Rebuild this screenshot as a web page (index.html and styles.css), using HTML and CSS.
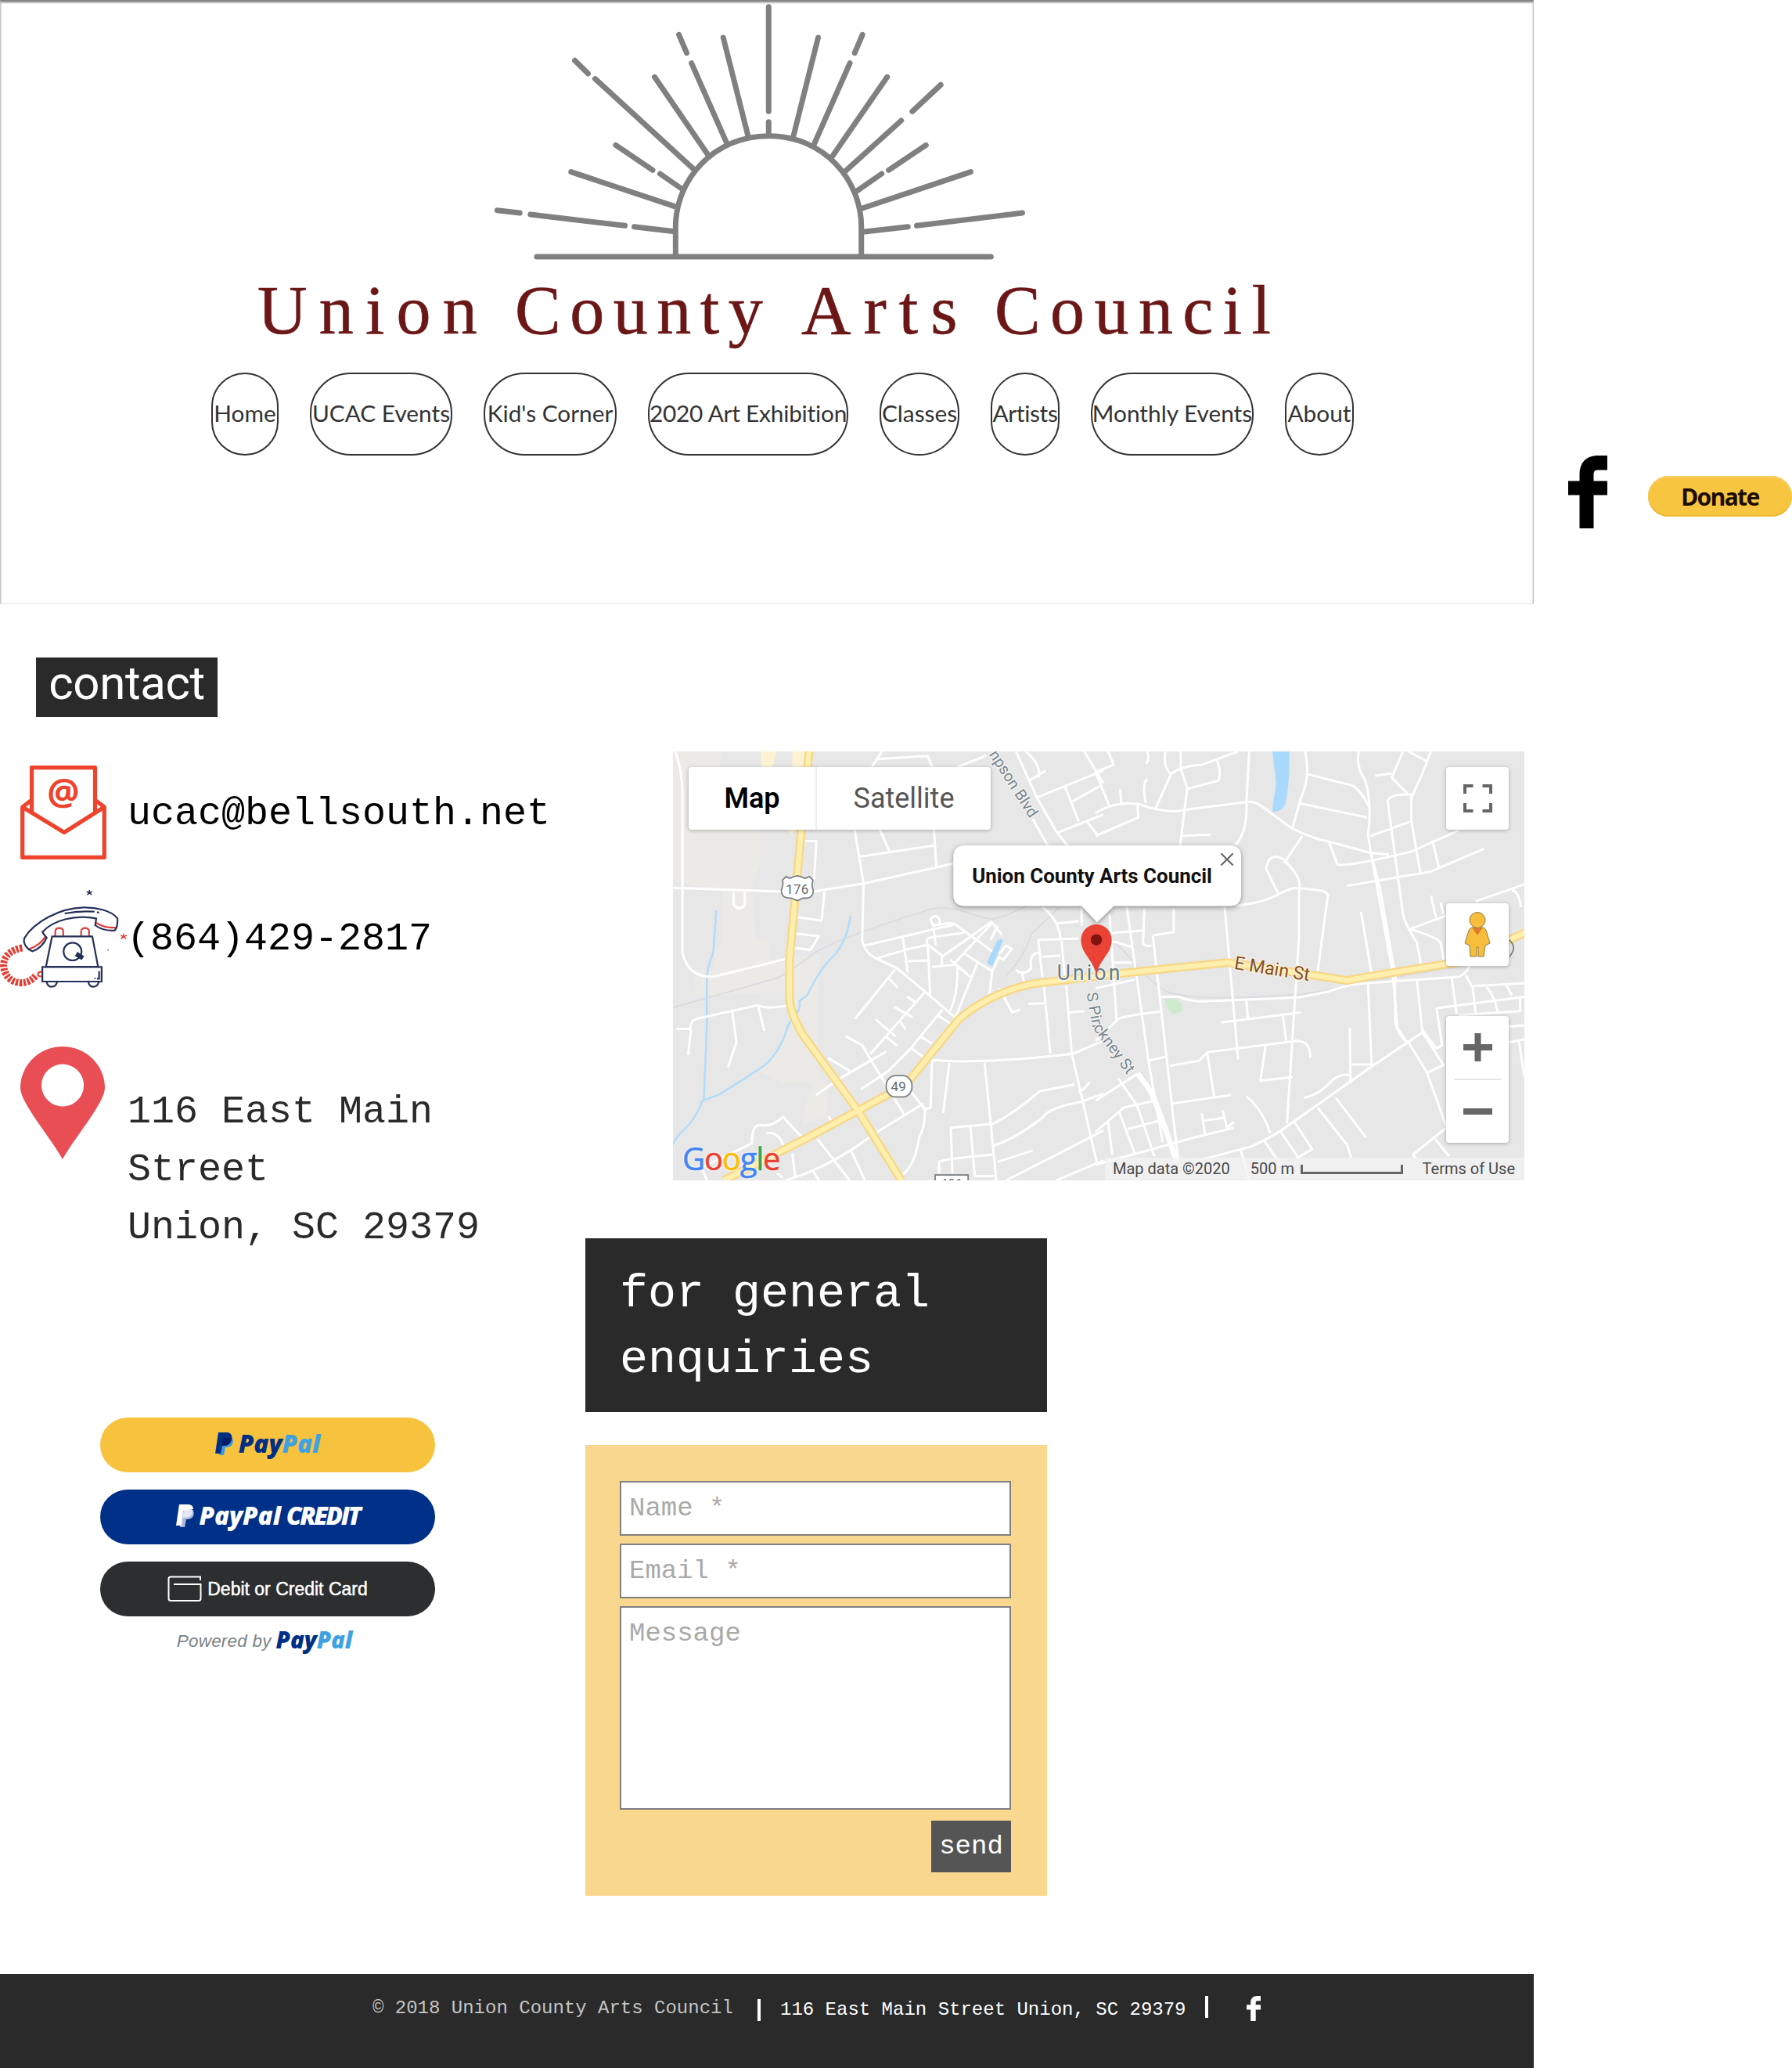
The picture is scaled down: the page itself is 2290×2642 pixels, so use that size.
FILE: index.html
```html
<!DOCTYPE html>
<html lang="en">
<head>
<meta charset="utf-8">
<title>Contact | Union County Arts Council</title>
<link rel="stylesheet" href="styles.css">
</head>
<body>
<div class="top">
  <header class="header">
    <svg class="sun" viewBox="0 0 1568 1050" preserveAspectRatio="none" aria-hidden="true">
      <path d="M182 984H1412M558 984V870C558 690 660 521 810 521S1061 690 1061 870V984"/>
      <path d="M810 26V427M810 467V516M687 144L754 520M567 133L588 203M601 242L697 550M501 295L649 600M285 232L321 282M340 302L610 652M396 556L496 652M516 666L577 726M275 659L560 793M75 806L136 816M165 822L421 865M446 869L555 887"/>
      <path d="M944 144L877 522M1064 133L1043 203M1030 242L932 556M1131 295L979 606M1276 325L1199 427M1169 462L1013 662M1236 556L1135 652M1116 666L1047 734M1357 659L1064 798M1497 816L1211 865M1187 869L1070 888"/>
    </svg>
    <h1 class="title"><span class="union">Union</span> <span class="county">County</span> <span class="arts">Arts</span> <span class="council">Council</span></h1>
    <nav class="nav">
      <a class="pill w-home">Home</a>
      <a class="pill w-events">UCAC Events</a>
      <a class="pill w-kids">Kid's Corner</a>
      <a class="pill w-exhibit">2020 Art Exhibition</a>
      <a class="pill w-classes">Classes</a>
      <a class="pill w-artists">Artists</a>
      <a class="pill w-monthly">Monthly Events</a>
      <a class="pill w-about">About</a>
    </nav>
  </header>
  <aside class="side">
    <svg class="fb" viewBox="0 0 50 93" aria-label="Facebook"><path d="M14.500 93V50.500H0V32.500H14.500V24C14.500 9 23 0 38 0H50V18.500H38C34 18.500 32.500 20.500 32.500 24V32.500H50V50.500H32.500V93Z"/></svg>
    <a class="donate">Donate</a>
  </aside>
</div>

<main class="main">
  <section class="info">
    <h2 class="tag">contact</h2>
    <div class="row email">
      <svg class="envelope" viewBox="0 0 110 120" aria-hidden="true">
        <path d="M14.500 60V2.700H95.500V60M14.500 44L2.700 53V117.300H107.300V53L95.500 44M2.700 53L56 85.500L107.300 53"/>
        <text x="55" y="50">@</text>
      </svg>
      <span>ucac@bellsouth.net</span>
    </div>
    <div class="row phone">
      <svg class="telephone" viewBox="0 948 353 378" preserveAspectRatio="none" aria-hidden="true">
        <g class="red">
          <path class="cord" d="M62 1173C30 1180 10 1205 10 1240C12 1280 30 1305 58 1307C78 1306 92 1294 101 1276"/>
          <path d="M154 1128V1108C156 1093 174 1093 176 1108V1128M226 1128V1108C228 1093 246 1093 248 1108V1128M116 1265C103 1262 102 1284 115 1282M266 1075C280 1090 300 1096 323 1096M128 1128C116 1150 104 1168 78 1179"/>
          <path class="star" d="M344 1118V1130L337 1138M344 1130L351 1138M336 1125L344 1130L353 1125"/>
        </g>
        <g class="navy">
          <path d="M118 1112C150 1065 210 1045 268 1060L265 1086C280 1102 300 1108 320 1106C326 1095 328 1080 327 1060C310 1028 265 1017 232 1018C165 1020 95 1075 68 1135C64 1150 70 1175 90 1186C106 1180 122 1160 130 1134Q124 1126 118 1112Z"/>
          <path d="M180 1041Q220 1030 263 1034M270 1036L276 1038M145 1129H257L273 1245H128ZM118 1246H283V1302H118ZM130 1304C134 1328 154 1328 159 1304M246 1304C250 1328 270 1328 275 1304M276 1262V1291H270M263 1290H266M300 1181H302"/>
          <path class="star" d="M249 951V961L243 970M249 961L255 970M241 958L249 961L257 958"/>
          <ellipse cx="202" cy="1187" rx="25" ry="34"/>
          <path class="dial" d="M212 1196L231 1212"/>
        </g>
      </svg>
      <span>(864)429-2817</span>
    </div>
    <div class="row address">
      <svg class="pin" viewBox="0 0 108 144" aria-hidden="true"><path fill-rule="evenodd" d="M54 144C40 118 0 72 0 53A54 53 0 0 1 108 53C108 72 68 118 54 144ZM54 22.500a27 27 0 1 0 .1 0Z"/></svg>
      <p>116 East Main<br>Street<br>Union, SC 29379</p>
    </div>
    <div class="paypal">
      <a class="pay gold">
        <svg class="pp" viewBox="0 0 23 29" preserveAspectRatio="none"><path fill="#3b9ae0" d="M8 6H20C25 9 23 19 15 19H13L11 29H5Z"/><path fill="#002f86" d="M4 0H15C25 0 23 17 12 17H9L7 27H0Z"/><path fill="#001c64" d="M10 7H20C20 13 17 17 12 17H8.500Z"/></svg>
        <b class="word">Pay<i>Pal</i></b>
      </a>
      <a class="pay blue">
        <svg class="pp" viewBox="0 0 23 29" preserveAspectRatio="none"><path fill="#a9b8db" d="M8 6H20C25 9 23 19 15 19H13L11 29H5Z"/><path fill="#fff" d="M4 0H15C19 0 22 2 22 6L9 8L7 27H0Z"/><path fill="#e3e7f2" d="M10 7H21C22 13 18 17 12 17H8.500Z"/></svg>
        <b class="word">PayPal</b><b class="word credit">CREDIT</b>
      </a>
      <a class="pay black">
        <svg class="card" viewBox="0 0 44 34"><path d="M42 6V1.500H4Q1.500 1.500 1.500 4V29Q1.500 32 4 32H40Q42.500 32 42.500 29V11H8"/></svg>
        <span>Debit or Credit Card</span>
      </a>
      <p class="powered"><em>Powered by</em><b class="word">Pay<i>Pal</i></b></p>
    </div>
  </section>

  <section class="reach">
    <div class="map">
      <svg class="canvas" viewBox="28 28 3046.400 1507" preserveAspectRatio="none">
        <rect x="28" y="28" width="3047" height="1507" fill="#e7e7e7"/>
        <path fill="#ebeae6" d="M28 28H200L195 90H345L340 420L310 500L325 690H370L375 760L555 740L545 930L550 1170L580 1200V1310L490 1340L500 1280L530 1190L420 1190L330 1150L400 1080L450 1000L440 870L110 890L105 800L180 790L175 740L205 700V520L28 480Z"/>
        <path fill="#fdf3d3" d="M342 28H398L385 83H345ZM455 28H500V83H455ZM435 302H470L450 318Z"/>
        <path fill="#a9dafd" d="M1188 692Q1205 682 1209 693L1172 780Q1160 785 1152 768ZM2173 28H2234C2234 90 2232 150 2222 200Q2215 240 2173 241C2176 190 2184 170 2186 140Q2180 90 2173 28Z"/>
        <path fill="#cdeacf" d="M1786 898H1826L1850 915V942L1818 952L1800 935Z"/>
        <g class="rail"><path d="M28 928L380 830C440 815 480 770 540 733S820 620 960 580C1040 570 1080 600 1170 618Q1240 600 1290 572M1410 575L1310 670Q1280 760 1216 818M1600 690C1660 740 1720 830 1790 870C1880 905 2100 895 2290 880L2560 830L3040 750"/></g>
        <g class="stream"><path d="M183 587L172 735Q148 790 149 840V1000L138 1255M663 605Q655 680 610 740Q560 780 508 885L480 905Q485 930 470 950L440 990Q410 1090 350 1135Q250 1200 190 1235L133 1255Q115 1310 75 1350Q35 1385 28 1410"/></g>
        <g class="road">
          <path d="M36 28Q62 100 62 180V735Q80 820 170 820L440 755M28 507L415 520M530 520L710 492L1031 422M678 302L710 492L705 690Q715 740 760 757L830 790L930 872L1040 965M768 302L802 378M695 398L965 358M962 302L970 433M740 83L775 28M760 55L940 44L955 83M1046 83L1150 42M1255 28L1330 190L1400 310L1440 360M1315 265L1370 360M1500 28L1568 140M1305 130L1362 95M1330 190L1568 95M1430 150L1480 275M1455 205L1555 150M1400 315L1568 250M1510 275L1550 325M1290 28Q1350 80 1335 120"/>
          <path d="M500 343H541L533 480M570 520L560 622L470 610M468 668L550 677L520 725L462 718M245 522V565Q260 590 285 570V522M715 710L1030 637Q1035 625 960 640Q940 610 968 606Q990 615 980 640M750 757L870 722L940 708Q925 685 960 680L1070 665M850 680L868 805M868 765L945 762M940 708L948 882M1030 630L1170 730M1170 625L990 750V780M955 785L1030 778L1170 630L1205 672M940 708L995 748M1065 735L1170 800L1160 890M1045 780Q1050 870 1020 940M1120 765L1040 960M1020 760L1092 820M960 645L968 710M1195 740L1220 710L1240 722L1210 760L1195 750L1170 800M1190 640L1165 690"/>
          <path d="M40 1003H90Q90 975 110 968L330 920Q370 935 440 920M93 1003L82 1095M240 940L255 1050L225 1138M332 920L355 1010M822 795L680 967M800 825L832 858M928 875L735 1090M865 888L895 910M820 925L885 962M752 968L825 1030M840 975L860 1005M790 1030L830 1062M992 935L880 1070L800 1150L700 1215M975 955L1022 985M915 1030L955 1055M880 1070L930 1105M645 1028L705 1060L735 1110L858 1308M583 1105L660 1150M790 1083L620 1180L540 1235M940 1110Q1100 1130 1460 1090L1568 1045M955 1115L950 1280L930 1285L860 1200M1017 1122L995 1298M750 1370L925 1265M930 1285Q930 1350 910 1380Q895 1480 850 1515M595 1330L585 1310"/>
          <path d="M130 1490L310 1405Q310 1340 340 1340Q380 1350 422 1312L495 1390M362 1370Q410 1360 430 1430M430 1535Q590 1490 750 1370M545 1390L660 1535M665 1430L715 1535M528 1500L550 1535M455 1440L465 1520M130 1490L150 1535M420 1525L400 1510M1143 1122L1185 1535M1355 850L1378 1090M1435 850L1455 1090L1545 1475M1255 795Q1280 820 1310 790Q1300 740 1335 735M1335 690L1480 685M1335 690L1350 820M1350 750L1415 745M1418 690L1432 840M1350 575Q1410 620 1415 690M1400 632L1480 625M1490 572V640M1195 860L1242 945L1270 935M1285 840L1275 800M1300 915L1355 913M1445 945L1500 940M1165 1340Q1250 1300 1340 1222L1465 1198M1480 1225Q1500 1215 1518 1190M1170 1415Q1250 1390 1350 1315Q1370 1280 1485 1260L1568 1230M1190 1470L1315 1430M1220 1535L1390 1450L1568 1360M1020 1350L1170 1337M1092 1345L1108 1520H1185M1022 1350L1028 1510M980 1510V1470Q990 1460 1170 1445M1400 1535L1568 1465"/>
        </g>
        <g class="road" transform="translate(1540 0)">
          <path d="M0 245Q60 205 150 212Q260 250 320 233L540 206Q570 200 600 225L700 297Q780 335 835 345L985 385L1050 390M45 28L65 75L0 100M0 100L50 222M88 160L92 210M185 28Q195 60 180 70M250 28Q240 80 270 108L215 228M305 28V90L328 155L303 357M270 108Q300 80 380 75L510 28M435 60Q450 100 440 130L328 160M185 125Q165 140 180 210M150 215L153 260L0 325M310 325L412 320M550 28L540 206Q545 310 500 357M750 28Q770 120 735 190L705 297M760 108L920 148Q950 165 980 225M730 210L972 260M942 28Q930 80 965 130Q990 210 975 320L985 385L1062 800L1080 1000L1115 1050M985 385Q1000 440 1020 520L1075 830M835 345L865 425Q900 435 1130 380L1300 305M740 325L675 420M655 530L610 440Q620 380 670 405Q740 470 728 508V680L685 1335M655 530Q700 505 728 508L815 518L832 530L795 800M500 570Q600 560 655 530"/>
          <path d="M900 500L1200 450L1390 370M1100 28L1060 120L1115 175M1200 28Q1170 110 1130 190V270L1162 455M1120 28L1190 65M1000 113L1060 105M1135 180Q1060 175 1045 200L1060 310L1100 600Q1110 640 1150 700L1165 780M985 325L1125 275M1205 340L1230 440M1360 555L1534 495M1490 515Q1515 520 1522 575M1125 652L1254 605M1125 652Q1220 680 1235 700L1245 760M1200 535L1218 612M1235 560L1245 600M950 592L988 812M462 575L510 1110M50 600L75 970M112 575L190 1120L240 1400M175 580L170 700Q175 715 200 710M205 675L280 662V580M205 675L295 1460M60 665L170 657M0 860L140 830M45 690L130 715M60 770H130"/>
          <path d="M230 890H300Q340 910 400 905L730 892L840 870Q900 845 1000 840L1300 820Q1340 800 1340 765M540 905L545 965M450 980L735 945M670 955L682 1045M265 1133L370 1115L400 1085L720 1045Q770 1045 768 1105M608 1065L590 1185L705 1172M400 1090L425 1245M275 1265L485 1235M0 1480L260 1410L350 1385L495 1350M380 1300L392 1375M390 1325L460 1315M455 1290L470 1350L495 1330M540 1240Q600 1290 625 1370M975 845L988 1135M910 998L912 1195M912 1128H985M745 1245Q800 1235 850 1180Q880 1160 910 1165M350 1470L560 1415Q640 1380 710 1328L988 1135L1170 1015M520 1430L550 1535M600 1390L690 1520M660 1360L725 1455L775 1425L710 1328M795 1280L900 1410L915 1455M860 1245L968 1385M75 970Q110 955 235 942M80 970L0 1045M185 1115L255 1100M150 1160L0 1255M0 1365L100 1280L210 1255M80 1175L150 1275L210 1450M85 1295L140 1440M115 1355L230 1325M45 1330L60 1445M1072 830V980Q1090 1040 1120 1050L1185 1155L1255 1345M1150 835L1170 1015L1245 1130L1185 1158M1220 930L1534 890M1220 930L1240 1060L1220 1072L1172 1010M1275 825L1292 950M1325 815L1350 860L1360 950M1350 852L1534 843M1395 850Q1430 890 1440 950M1470 850L1490 885M1300 955L1520 940L1518 890M1478 995L1534 990M1478 1050L1534 1040M1515 1045L1534 1170M1135 1445L1255 1350M1135 1445L1150 1460M1215 1390L1265 1450"/>
          <path class="wide" d="M150 1160Q200 1220 210 1250Q250 1350 290 1470"/>
        </g>
        <g class="hwy-edge"><path d="M515 28L485 330L445 760V900Q450 950 490 1020L690 1290L845 1535M210 1535L500 1390L690 1290L860 1200L1050 970C1120 910 1200 870 1310 845L1640 807L2010 770Q2100 780 2440 833Q2480 825 2540 815L2860 765L3075 665"/></g>
        <g class="hwy"><path d="M515 28L485 330L445 760V900Q450 950 490 1020L690 1290L845 1535M210 1535L500 1390L690 1290L860 1200L1050 970C1120 910 1200 870 1310 845L1640 807L2010 770Q2100 780 2440 833Q2480 825 2540 815L2860 765L3075 665"/></g>
        <g class="sign">
          <path d="M420 480L433 467Q445 478 455 470L473 465L491 470Q502 478 515 467L529 480Q522 500 530 515Q530 548 495 543L473 552L450 543Q415 545 416 515Q424 500 420 480Z"/>
          <text x="473" y="528">176</text>
          <rect x="791" y="1167" width="92" height="75" rx="34"/>
          <text x="835" y="1221">49</text>
          <rect class="square" x="966" y="1516" width="118" height="40"/>
          <text x="1025" y="1562">491</text>
          <path class="ring" d="M3020 690Q3050 715 3022 748"/>
        </g>
        <text class="street" transform="translate(1158 38) rotate(57)">npson Blvd</text>
        <text class="street" transform="translate(1508 878) rotate(80)">S Pin</text>
        <text class="street" transform="translate(1530 1000) rotate(53)">ckney St</text>
        <text class="street main-st" transform="translate(2034 792) rotate(9)">E Main St</text>
        <text class="town" x="1402" y="830">Union</text>
        <path class="bubble" d="M1073 358H2019Q2061 358 2061 400V529Q2061 571 2019 571H1606L1545 628L1490 571H1073Q1031 571 1031 529V400Q1031 358 1073 358Z"/>
        <text class="place" x="1098" y="489" textLength="859" lengthAdjust="spacingAndGlyphs">Union County Arts Council</text>
        <path class="close" d="M1989 386L2032 428M2032 386L1989 428"/>
        <path fill="#ea4335" d="M1543 815C1534 760 1488 740 1488 690A55 54 0 0 1 1598 690C1598 740 1552 760 1543 815Z"/>
        <circle cx="1543" cy="690" r="20" fill="#811411"/>
      </svg>
      <div class="types"><b>Map</b><span>Satellite</span></div>
      <div class="ctl full"><svg viewBox="0 0 37 36"><path d="M2 12V2H12.500M24.500 2H35V12M35 24V34H24.500M12.500 34H2V24"/></svg></div>
      <div class="ctl peg">
        <svg viewBox="0 0 34 60"><path d="M10 21H24Q28 22 29 28L33 41L27 44L25 58H18V46H16V58H8L7 44L1 41L5 28Q6 22 10 21Z"/><path class="scarf" d="M10 21H24L17 31Z"/><circle cx="17" cy="11.500" r="10"/></svg>
      </div>
      <div class="ctl zoom"><svg viewBox="0 0 37 36"><path d="M0 18H37M18.500 0V36"/></svg><hr><svg viewBox="0 0 37 36"><path d="M0 18H37"/></svg></div>
      <div class="google"><span class="gb">G</span><span class="gr">o</span><span class="gy">o</span><span class="gb">g</span><span class="gg">l</span><span class="gr">e</span></div>
      <div class="legal"><span class="data">Map data ©2020</span><span class="dist">500 m<i></i></span><span class="terms">Terms of Use</span></div>
    </div>
    <h2 class="enquiries">for general enquiries</h2>
    <form class="form">
      <input type="text" placeholder="Name *">
      <input type="text" placeholder="Email *">
      <textarea placeholder="Message"></textarea>
      <button type="button">send</button>
    </form>
  </section>
</main>

<footer class="footer">
  <span class="copy">© 2018 Union County Arts Council</span>
  <span class="bar low"></span>
  <span class="addr">116 East Main Street Union, SC 29379</span>
  <span class="bar"></span>
  <svg class="fb small" viewBox="0 0 50 93" preserveAspectRatio="none" aria-label="Facebook"><path d="M14.500 93V50.500H0V32.500H14.500V24C14.500 9 23 0 38 0H50V18.500H38C34 18.500 32.500 20.500 32.500 24V32.500H50V50.500H32.500V93Z"/></svg>
</footer>
</body>
</html>
```
FILE: styles.css
```css
* { box-sizing: border-box; }
body { margin: 0; background: #fff; width: 2290px; height: 2642px; overflow: hidden; font-family: "Liberation Mono", "Courier New", monospace; }
h1, h2, p { margin: 0; font-weight: 400; }
svg { display: block; flex: none; }

.top { display: flex; height: 772px; }
.header {
  width: 1960px; height: 772px;
  border: 1px solid #c4c4c4; border-top: 2px solid #848484; border-bottom-color: #e8e8e8;
  box-shadow: inset 0 2px 2px rgba(0, 0, 0, .28), inset 0 0 2px rgba(0, 0, 0, .1);
}
.sun { width: 740px; height: 350px; margin: -2px 0 0 599px; fill: none; stroke: #808080; stroke-width: 7px; stroke-linecap: round; }
.sun path { vector-effect: non-scaling-stroke; }
.title {
  display: grid; grid-template-columns: 329px 366px 247px auto; justify-content: start;
  height: 94px; margin-left: 328px; line-height: 94px; white-space: nowrap;
  font-family: "Liberation Serif", serif; font-size: 88px; color: #6b1717; -webkit-text-stroke: .6px #6b1717;
}
.union { letter-spacing: 15.2px; }
.county { letter-spacing: 11.5px; }
.arts { letter-spacing: 16px; }
.council { letter-spacing: 12.4px; }
.nav { display: flex; gap: 40px; margin: 32px 0 0 269px; }
.pill {
  display: flex; align-items: center; justify-content: center; flex: none; height: 106px; padding-bottom: 3px;
  border: 2px solid #333; border-radius: 52px; color: #333; white-space: nowrap;
  font-family: Lato, sans-serif; font-size: 29.8px; font-variant-ligatures: none;
}
.w-home { width: 86px; }
.w-events { width: 182px; }
.w-kids { width: 170px; }
.w-exhibit { width: 256px; letter-spacing: -.2px; }
.w-classes { width: 102px; }
.w-artists { width: 88px; letter-spacing: -.3px; }
.w-monthly { width: 208px; }
.w-about { width: 88px; }

.side { display: flex; align-items: flex-start; padding: 582px 0 0 44px; }
.fb { width: 50px; height: 93px; }
.donate {
  width: 184px; height: 52px; margin: 26px 0 0 52px; border-radius: 26px; background: #f7c540;
  box-shadow: inset 0 2px 1px #f9cd68, inset 0 -2px 1px #efb534;
  font: 700 30px/54px "Noto Sans", sans-serif; letter-spacing: -1.6px; text-align: center; color: #1c0c02;
}

.main { display: flex; width: 1960px; height: 1750px; }
.info { width: 748px; padding-top: 68px; }
.tag { width: 232px; height: 76px; margin-left: 46px; background: #2a2a2a; color: #fff; text-align: center; font: 400 60px/66px Roboto, sans-serif; letter-spacing: -.4px; }
.row { display: flex; align-items: center; font-size: 50px; color: #000; white-space: nowrap; }
.email { margin-top: 62px; height: 120px; padding-left: 26px; gap: 27px; }
.email span { padding-top: 2px; }
.envelope { width: 110px; height: 120px; }
.envelope path { fill: none; stroke: #ee432d; stroke-width: 5.2px; stroke-linejoin: round; }
.envelope text { fill: #ee432d; font: 700 46px "Open Sans", sans-serif; text-anchor: middle; }
.phone { margin-top: 38px; height: 126px; }
.telephone { width: 162px; height: 126px; }
.telephone path, .telephone ellipse { fill: none; stroke-width: 2.2px; vector-effect: non-scaling-stroke; }
.telephone .red { stroke: #e23e35; }
.telephone .navy { stroke: #25305a; }
.telephone .cord { stroke-width: 9px; stroke-dasharray: 3.2px 1.7px; }
.telephone .dial { stroke-width: 6px; }
.telephone .star { stroke-width: 1.5px; }
.address { align-items: flex-start; margin-top: 75px; padding-left: 26px; gap: 29px; color: #2a2a2a; }
.address p { line-height: 73.8px; padding-top: 47px; }
.pin { width: 108px; height: 144px; fill: #e84e54; }

.paypal { width: 428px; margin: 206px 0 0 128px; }
.pay { display: flex; align-items: center; justify-content: center; height: 70px; margin-bottom: 22px; border-radius: 35px; }
.gold { background: #f7c23e; }
.blue { background: #003087; color: #fff; }
.black { background: #2c2e2f; color: #fff; gap: 7px; font: 400 23px "Liberation Sans", sans-serif; -webkit-text-stroke: .5px #fff; }
.pp { width: 23px; height: 29px; margin: -4px 7px 0 0; }
.word { margin-top: -4px; font: italic 800 31.5px/36px "Open Sans", sans-serif; letter-spacing: -.1px; color: #002f86; }
.word i { color: #3ea2e2; }
.blue .word { color: #fff; }
.blue .credit { margin-left: 7px; letter-spacing: -2.4px; }
.card { width: 44px; height: 34px; fill: none; stroke: #fff; stroke-width: 2px; }
.powered { display: flex; align-items: center; justify-content: center; gap: 6px; height: 36px; margin-top: -8px; padding-right: 8px; }
.powered em { font: italic 22.5px "Liberation Sans", sans-serif; color: #7b8388; letter-spacing: .2px; }
.powered .word { font-size: 29.5px; }

.reach { width: 1212px; padding-top: 188px; }
.map { position: relative; width: 1088px; height: 548px; margin-left: 112px; overflow: hidden; font-family: Roboto, sans-serif; }
.canvas { width: 1088px; height: 548px; }
.canvas g path { fill: none; vector-effect: non-scaling-stroke; stroke-linejoin: round; }
.rail { stroke: #dadbe0; stroke-width: 1.8px; }
.stream { stroke: #b0dbfa; stroke-width: 2.4px; }
.road { stroke: #fff; stroke-width: 3px; }
.road .wide { stroke-width: 7px; }
.hwy-edge { stroke: #f7d785; stroke-width: 11px; }
.hwy { stroke: #feefae; stroke-width: 6.5px; }
.canvas .sign path, .sign rect { fill: #fff; stroke: #7b8084; stroke-width: 5px; vector-effect: none; }
.canvas .sign .ring { fill: none; }
.sign text { font-size: 47px; fill: #63686c; text-anchor: middle; letter-spacing: 1px; }
.street { font-size: 55px; fill: #78868c; stroke: #f3f3f3; stroke-width: 7px; paint-order: stroke; }
.main-st { font-size: 65px; fill: #83501f; stroke: #fdf3e0; }
.town { font-size: 74px; letter-spacing: 9px; fill: #6b7a82; stroke: #f3f3f3; stroke-width: 8px; paint-order: stroke; }
.bubble { fill: #fff; filter: drop-shadow(0 5px 9px rgba(0, 0, 0, .4)); }
.place { font-size: 71px; font-weight: 700; fill: #111; }
.close { stroke: #666; stroke-width: 6px; }
.types, .ctl { position: absolute; background: #fff; border-radius: 4px; box-shadow: 0 1px 5px rgba(0, 0, 0, .28); }
.types { left: 20px; top: 20px; display: flex; width: 386px; height: 80px; font-size: 36px; line-height: 81px; text-align: center; color: #565656; }
.types b { width: 164px; font-weight: 600; color: #000; border-right: 2px solid #eee; }
.types span { flex: 1; }
.ctl { left: 988px; width: 80px; height: 80px; display: flex; align-items: center; justify-content: center; }
.ctl svg { width: 37px; height: 36px; fill: none; stroke: #666; stroke-width: 4px; }
.full { top: 20px; }
.peg { top: 194px; }
.ctl.peg svg { width: 34px; height: 60px; fill: #f8bd3a; stroke: #8d7a45; stroke-width: 1px; }
.ctl.peg .scarf { fill: #dd7d2e; stroke: none; }
.zoom { top: 338px; height: 162px; flex-direction: column; }
.zoom svg { stroke-width: 8px; }
.zoom hr { width: 60px; height: 2px; margin: 22px 0; border: 0; background: #e6e6e6; }
.google { position: absolute; left: 12px; bottom: 4px; font: 500 40px/48px "Open Sans", sans-serif; letter-spacing: -1.2px; -webkit-text-stroke: .6px; text-shadow: 0 0 3px #fff, 0 0 3px #fff; }
.gb { color: #4285f4; }
.gr { color: #ea4335; }
.gy { color: #fbbc05; }
.gg { color: #34a853; }
.legal { position: absolute; right: 0; bottom: 0; display: flex; width: 536px; height: 29px; padding-right: 12px; background: rgba(243, 243, 243, .75); font-size: 20px; line-height: 29px; color: #4a4a4a; white-space: nowrap; }
.data { width: 176px; padding-left: 10px; }
.dist { display: flex; width: 230px; padding-left: 10px; }
.dist i { width: 131px; height: 12px; margin: 9px 0 0 8px; border: 3px solid #666; border-top: 0; }
.terms { margin-left: auto; }

.enquiries { width: 590px; height: 222px; margin-top: 74px; padding: 29px 44px; background: #2a2a2a; color: #fff; font-size: 60px; line-height: 84px; }
.form { display: flex; flex-direction: column; gap: 10px; width: 590px; height: 576px; margin-top: 42px; padding: 46px 46px 0 44px; background: #f9d78f; }
.form input, .form textarea { width: 500px; height: 70px; margin: 0; padding: 0 10px; border: 2px solid #808080; border-radius: 0; background: #fff; resize: none; outline: 0; font: 34px/38px "Liberation Mono", "Courier New", monospace; flex: none; }
.form textarea { height: 260px; padding-top: 14px; overflow: hidden; }
.form ::placeholder { color: #a9a9a9; opacity: 1; }
.form button { align-self: flex-end; width: 102px; height: 66px; margin-top: 4px; padding: 0; border: 0; background: #555; color: #fff; font: 34px/66px "Liberation Mono", "Courier New", monospace; }

.footer { display: flex; align-items: flex-start; width: 1960px; height: 120px; padding: 28px 0 0 476px; background: #2a2a2a; color: #fff; font-size: 24px; line-height: 32px; white-space: nowrap; }
.copy { width: 492px; color: #c4c4c4; }
.bar { width: 4px; height: 28px; background: #fff; }
.bar.low { margin-top: 4px; }
.addr { width: 543px; padding: 2px 0 0 25px; margin-right: 25px; }
.small { width: 18px; height: 32px; margin-left: 49px; fill: #fff; }
```
